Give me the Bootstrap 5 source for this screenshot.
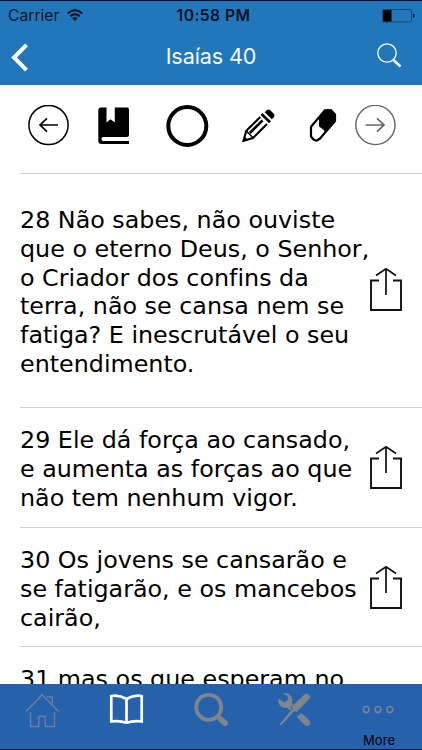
<!DOCTYPE html>
<html lang="pt">
<head>
<meta charset="utf-8">
<meta name="viewport" content="width=device-width, initial-scale=1">
<title>Isaías 40</title>
<link href="https://cdn.jsdelivr.net/npm/bootstrap@5.3.0/dist/css/bootstrap.min.css" rel="stylesheet">
<style>
body{height:750px;font-family:Inter,"Liberation Sans",sans-serif;color:#000;background:#fff}
svg{display:block;flex:none}
.app-head{height:85px;background:#2277bb;border-top:1px solid #0b1230;flex:none}
.status-row{height:28px;padding:0 7px 0 8px;font-size:15.7px;line-height:29px;color:#08182c;display:grid;grid-template-columns:1fr auto 1fr}
.clock{font-weight:600;letter-spacing:.42px;color:#03101f;padding-left:4px}
.title-row{height:56px;padding:0 20px 0 11px;display:grid;grid-template-columns:1fr auto 1fr}
.page-title{font-size:21.6px;line-height:55px;color:#f4faff;letter-spacing:-.12px;padding-left:9px}
.tools{height:88px;padding:20px 0 0 28px;flex:none}
.gap-book{margin-left:29px}
.gap-ring{margin-left:36px}
.gap-pen{margin-left:33px}
.gap-next{margin-left:18px}
.gap-tab{margin-left:49px}
.gap-tool{margin-left:48px}
.verse{border-top:1px solid #d2d2d2;margin-left:20px;flex:none;font-family:"DejaVu Sans",Verdana,sans-serif;font-size:23.8px;line-height:28.8px;font-variant-ligatures:none}
.verse p{white-space:nowrap;width:350px}
.share-icon{margin:19px 0 0 -1px}
.v28 .share-icon{margin-top:61px}
.v28{height:234px;padding-top:32px}
.v29{height:120px;padding-top:18px}
.v30{height:119px;padding-top:18px}
.v31{height:38px;padding-top:18px}
.tabs{height:66px;background:#2562ab;border-bottom:1px solid #081638;padding-left:25px;flex:none}
.more{font-size:13px;line-height:14px;letter-spacing:.1px;padding-left:1px}
</style>
<script src="https://cdn.jsdelivr.net/npm/bootstrap@5.3.0/dist/js/bootstrap.bundle.min.js"></script>
</head>
<body class="d-flex flex-column overflow-hidden m-0">
<svg width="0" height="0" class="position-absolute"><defs>
<symbol id="share" viewBox="0 0 34 45"><g fill="none" stroke="#111" stroke-width="1.9"><path d="M10 13.5H2V43H32V13.5H24"/><path d="M17 28V2M7 8.5 17 1.7 27 8.5" stroke-width="1.7"/></g></symbol>
</defs></svg>
<header class="app-head">
  <div class="status-row">
    <div class="d-flex align-items-center"><span>Carrier</span>
      <svg class="ms-2" width="16" height="13" viewBox="0 0 16 13"><g fill="none" stroke="#03101f" stroke-width="2"><path d="M.7 4.4Q8-2.2 15.3 4.4"/><path d="M3.3 7.3Q8 3.1 12.7 7.3"/></g><path d="M5.3 9.2Q8 6.9 10.7 9.2L8 12Z" fill="#03101f"/></svg></div>
    <div class="clock">10:58 PM</div>
    <div class="d-flex align-items-center justify-content-end"><svg width="33" height="14" viewBox="0 0 33 14"><rect x=".5" y=".5" width="29" height="12.5" rx="1.5" fill="none" stroke="#164a78"/><path d="M1 1H9.5V12.5H1Z" fill="#000"/><path d="M31 5h1.4v3.5H31z" fill="#03101f"/></svg></div>
  </div>
  <div class="title-row">
    <div class="d-flex align-items-center"><svg width="18" height="29" viewBox="0 0 18 29"><path d="M15.5 1.8 3 14.5 15.5 27.2" fill="none" stroke="#fff" stroke-width="4"/></svg></div>
    <div class="page-title">Isaías 40</div>
    <div class="d-flex align-items-center justify-content-end"><svg width="26" height="28" viewBox="375 42 26 28"><g fill="none" stroke="#fff"><circle cx="386" cy="52" r="9.2" stroke-width="1.3"/><path d="m392.5 59 7 6.5" stroke-width="2.4"/></g></svg></div>
  </div>
</header>
<main class="flex-grow-1 overflow-hidden d-flex flex-column">
  <div class="tools d-flex align-items-start">
    <svg width="41" height="42" viewBox="28 105 41 42"><g fill="none" stroke="#000" stroke-width="1.5"><circle cx="48.5" cy="125" r="19.6"/><path d="M58 125H40M47 118.3 40 125 47 131.7" stroke-width="1.7"/></g></svg>
    <svg class="gap-book" width="32" height="42" viewBox="98 105 32 42"><path d="M101 107.5H106.5V122.5L110.5 119.3 114.8 122.5V107.5H127Q129 107.5 129 109.5V134.5Q129 137 126.5 137H103Q101.5 137 101.5 139T103 141H129V144H101.5Q98.3 144 98.3 141V110.5Q98.3 107.5 101 107.5Z"/></svg>
    <svg class="gap-ring" width="43" height="42" viewBox="166 105 43 42"><circle cx="187.3" cy="126" r="19" fill="none" stroke="#000" stroke-width="4"/></svg>
    <svg class="gap-pen" width="34" height="42" viewBox="242 105 34 42"><g fill="none" stroke="#000"><path d="M260.3 117 246.3 130.7 243.5 140.7 253 138 267 124" stroke-width="2.1"/><path d="M262.5 120.3 249.8 133" stroke-width="2.6"/><path d="m246.3 131 7 7" stroke-width="1.4"/><path d="m261.5 114 8.5 8.3" stroke-width="2.6"/></g><path d="M242.5 142 244.3 136.5 248.3 139.9Z"/><path d="M264.7 112.2 267 110Q268.5 108.7 270.2 110.2L274 114Q275 115.4 274 117L271.8 119.2Z"/></svg>
    <svg class="gap-pen" width="28" height="42" viewBox="309 105 28 42"><path d="M325 110.3 331 110.3 335 114.5V121L320 138.5 316.5 140.7 313.5 139.5 311 136.5V126.7Z" fill="#fff" stroke="#000" stroke-width="2.2" stroke-linejoin="round"/><path d="M319 117.7 326 109.5H331.5L335.7 114.5V121L324.2 133.3V130.3L319 126.5Z"/></svg>
    <svg class="gap-next" width="41" height="42" viewBox="355 105 41 42"><g fill="none" stroke="#666" stroke-width="1.4"><circle cx="375.4" cy="125" r="19.6"/><path d="M365.5 125H384M377 118.3 384 125 377 131.7" stroke-width="1.7"/></g></svg>
  </div>
  <article class="verse v28 d-flex"><p class="m-0">28 Não sabes, não ouviste<br>que o eterno Deus, o Senhor,<br>o Criador dos confins da<br>terra, não se cansa nem se<br>fatiga? E inescrutável o seu<br>entendimento.</p><svg class="share-icon" width="34" height="45"><use href="#share"/></svg></article>
  <article class="verse v29 d-flex"><p class="m-0">29 Ele dá força ao cansado,<br>e aumenta as forças ao que<br>não tem nenhum vigor.</p><svg class="share-icon" width="34" height="45"><use href="#share"/></svg></article>
  <article class="verse v30 d-flex"><p class="m-0">30 Os jovens se cansarão e<br>se fatigarão, e os mancebos<br>cairão,</p><svg class="share-icon" width="34" height="45"><use href="#share"/></svg></article>
  <article class="verse v31"><p class="m-0">31 mas os que esperam no</p></article>
</main>
<nav class="tabs d-flex align-items-start">
  <svg width="35" height="50" viewBox="25 684 35 50"><g fill="none" stroke="#6f7f94" stroke-width="1.4"><path d="M26 711.5 42.2 694.7 58.5 711.5M30.5 712V726.5H38.8V716.5H45.3V726.5H54.5V712M47 697H52.3V703.5"/></g></svg>
  <svg class="gap-tab" width="35" height="50" viewBox="109 684 35 50"><path d="M126.5 699Q119 694.5 111.3 696V721.5Q119 720.3 126.5 722.7 134 720.3 141.7 721.5V696Q134 694.5 126.5 699V722" fill="none" stroke="#fff" stroke-width="2.7"/></svg>
  <svg class="gap-tab" width="36" height="50" viewBox="193 684 36 50"><g fill="none" stroke="#7f858b"><circle cx="208.7" cy="707.3" r="12.5" stroke-width="3.8"/><path d="m217.5 716.5 3 3" stroke-width="4"/><path d="m220.5 719 4.5 4.2" stroke-width="5.8" stroke-linecap="round"/></g></svg>
  <svg class="gap-tool" width="36" height="50" viewBox="277 684 36 50"><g fill="#7f858b"><path d="M278.5 698.5 284.5 702.3 288 699.8 287.5 696 283 693.5Q289 692 291.7 697 293 700 292 703L297 708 292 713 287.5 708Q281.5 708.5 279 704 277.5 701 278.5 698.5Z"/><path d="M301.5 713 309 720Q312 723.5 308.7 725.5 306 727 303.3 723.7L296.7 717Z"/><path d="M280 726 279.3 724 292 708.7 291.3 706.3 304.8 693.8Q307.3 692.3 309.7 694.7 311.3 696.7 309.7 699L296.7 712.5 294.3 711.5 282 725Z" stroke="#2562ab" stroke-width=".9"/></g></svg>
  <div class="d-flex flex-column gap-tab"><svg width="34" height="49" viewBox="362 684 34 49"><g fill="none" stroke="#7a8491" stroke-width="1.5"><circle cx="366.2" cy="709.5" r="2.9"/><circle cx="378" cy="709.5" r="2.9"/><circle cx="389.8" cy="709.5" r="2.9"/></g></svg><span class="more">More</span></div>
</nav>
</body>
</html>
